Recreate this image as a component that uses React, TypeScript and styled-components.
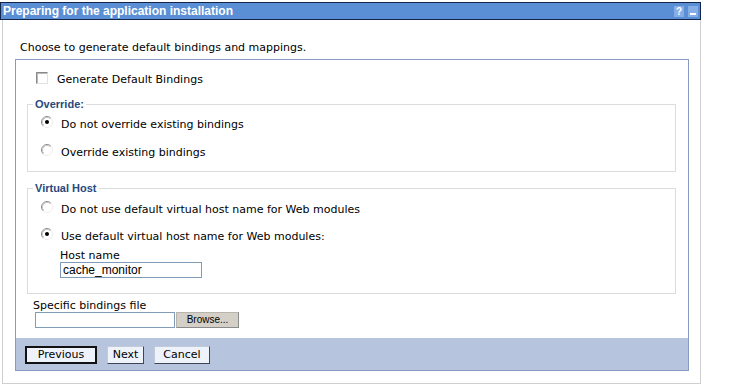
import React from "react";
import styled, { createGlobalStyle } from "styled-components";

const Global = createGlobalStyle`
  html, body { margin: 0; padding: 0; background: #fff; }
  body { font-family: "DejaVu Sans", Verdana, sans-serif; font-size: 11px; color: #000; }
  * { box-sizing: border-box; }
`;

const Page = styled.div`
  padding-top: 2px;
  width: 701px;
`;

const TitleBar = styled.header`
  display: flex;
  align-items: center;
  justify-content: space-between;
  height: 18px;
  border: 1px solid #13254a;
  background: #5a8fd6;
  padding: 0 2px;
`;

const Title = styled.h1`
  margin: 0;
  font: bold 12px/16px "Liberation Sans", Arial, sans-serif;
  color: #fff;
`;

const TitleIcons = styled.div`
  display: flex;
  gap: 4px;
`;

const IconBox = styled.span`
  display: flex;
  align-items: center;
  justify-content: center;
  width: 10px;
  height: 11px;
  background: #86aee6;
  color: #fff;
  font: bold 10px/11px "Liberation Sans", Arial, sans-serif;
`;

const Body = styled.div`
  margin-left: 2px;
  width: 699px;
  border: 1px solid #cfcfcf;
  border-top: none;
  padding: 0 11px 12px 12px;
`;

const Intro = styled.p`
  margin: 0;
  padding: 21px 0 5px 5px;
  line-height: 13px;
`;

const FormBox = styled.div`
  display: flex;
  flex-direction: column;
  border: 1px solid #8a9bc2;
`;

const Content = styled.div`
  padding: 12px 12px 10px 11px;
`;

const CheckRow = styled.label`
  display: flex;
  align-items: flex-start;
  height: 14px;
  line-height: 16px;
  padding-left: 9px;
  gap: 9px;
`;

const CheckBox = styled.span`
  width: 12px;
  height: 12px;
  background: #fff;
  border: 1px solid;
  border-color: #8a8a8a #e2e2e2 #e2e2e2 #8a8a8a;
  box-shadow: inset 1px 1px 0 #b8b8b8;
`;

const Group = styled.fieldset<{ $gap: number; $bottom: number }>`
  margin: ${(p) => p.$gap}px 0 0 0;
  border: 1px solid #dcdcdc;
  padding: 0 0 ${(p) => p.$bottom}px 5px;
  min-width: 0;
`;

const Legend = styled.legend`
  padding: 0 2px;
  font: bold 11px/13px "Liberation Sans", Arial, sans-serif;
  color: #28497c;
`;

const RadioRow = styled.label<{ $top: number }>`
  display: flex;
  align-items: flex-start;
  height: 14px;
  line-height: 16px;
  margin-top: ${(p) => p.$top}px;
  padding-left: 8px;
  gap: 8px;
`;

const RadioSvg = styled.svg`
  flex: none;
  margin-top: -1px;
`;

const HostBlock = styled.div`
  margin: 5px 0 0 27px;
`;

const FieldLabel = styled.div`
  padding-top: 1px;
  line-height: 13px;
`;

const TextInput = styled.input<{ $w: number }>`
  display: block;
  width: ${(p) => p.$w}px;
  height: 16px;
  margin: 0;
  padding: 0 2px;
  border: 1px solid #7f9db9;
  background: #fff;
  font: 12px/14px "Liberation Sans", Arial, sans-serif;
  color: #000;
  outline: none;
`;

const FileField = styled.div`
  margin-top: 4px;
  padding-left: 6px;
`;

const FileRow = styled.div`
  display: flex;
  gap: 1px;
  margin-left: 2px;
`;

const BrowseButton = styled.button`
  width: 63px;
  height: 16px;
  margin: 0;
  padding: 0;
  background: #d4d0c8;
  border: 1px solid;
  border-color: #b8b5ae #8a8a8a #8a8a8a #b8b5ae;
  font: 10px/14px "Liberation Sans", Arial, sans-serif;
  color: #000;
`;

const ButtonBar = styled.div`
  display: flex;
  gap: 10px;
  height: 32px;
  padding: 8px 0 0 9px;
  background: #b6c5dd;
`;

const NavButton = styled.button<{ $w: number; $default?: boolean }>`
  width: ${(p) => p.$w}px;
  height: 18px;
  margin: 0;
  padding: 0;
  background: #eef2fa;
  border: ${(p) => (p.$default ? "2px solid #111" : "1px solid")};
  border-color: ${(p) => (p.$default ? "#111" : "#c4cbd8 #3e4656 #3e4656 #c4cbd8")};
  font: 11px/14px "DejaVu Sans", Verdana, sans-serif;
  color: #000;
`;

function Radio({ checked }: { checked?: boolean }) {
  return (
    <RadioSvg width="12" height="12" viewBox="0 0 12 12">
      <circle cx="6" cy="6" r="5" fill="#fff" />
      <path d="M2.11 9.89 A5.5 5.5 0 0 1 9.89 2.11" fill="none" stroke="#8c8c8c" strokeWidth="1" />
      <path d="M9.89 2.11 A5.5 5.5 0 0 1 2.11 9.89" fill="none" stroke="#ececec" strokeWidth="1" />
      <path d="M2.82 9.18 A4.5 4.5 0 0 1 9.18 2.82" fill="none" stroke="#c4c4c4" strokeWidth="1" />
      {checked && <circle cx="6" cy="6" r="2" fill="#000" />}
    </RadioSvg>
  );
}

export default function App() {
  return (
    <Page>
      <Global />
      <TitleBar>
        <Title>Preparing for the application installation</Title>
        <TitleIcons>
          <IconBox>?</IconBox>
          <IconBox>
            <svg width="6" height="9" viewBox="0 0 6 9">
              <rect x="0" y="6" width="6" height="2" fill="#fff" />
            </svg>
          </IconBox>
        </TitleIcons>
      </TitleBar>
      <Body>
        <Intro>Choose to generate default bindings and mappings.</Intro>
        <FormBox>
          <Content>
            <CheckRow>
              <CheckBox />
              Generate Default Bindings
            </CheckRow>
            <Group $gap={12} $bottom={12}>
              <Legend>Override:</Legend>
              <RadioRow $top={6}>
                <Radio checked />
                Do not override existing bindings
              </RadioRow>
              <RadioRow $top={14}>
                <Radio />
                Override existing bindings
              </RadioRow>
            </Group>
            <Group $gap={10} $bottom={15}>
              <Legend>Virtual Host</Legend>
              <RadioRow $top={7}>
                <Radio />
                Do not use default virtual host name for Web modules
              </RadioRow>
              <RadioRow $top={13}>
                <Radio checked />
                Use default virtual host name for Web modules:
              </RadioRow>
              <HostBlock>
                <FieldLabel>Host name</FieldLabel>
                <TextInput $w={142} defaultValue="cache_monitor" />
              </HostBlock>
            </Group>
            <FileField>
              <FieldLabel>Specific bindings file</FieldLabel>
              <FileRow>
                <TextInput $w={140} />
                <BrowseButton>Browse...</BrowseButton>
              </FileRow>
            </FileField>
          </Content>
          <ButtonBar>
            <NavButton $w={72} $default>Previous</NavButton>
            <NavButton $w={37}>Next</NavButton>
            <NavButton $w={56}>Cancel</NavButton>
          </ButtonBar>
        </FormBox>
      </Body>
    </Page>
  );
}
